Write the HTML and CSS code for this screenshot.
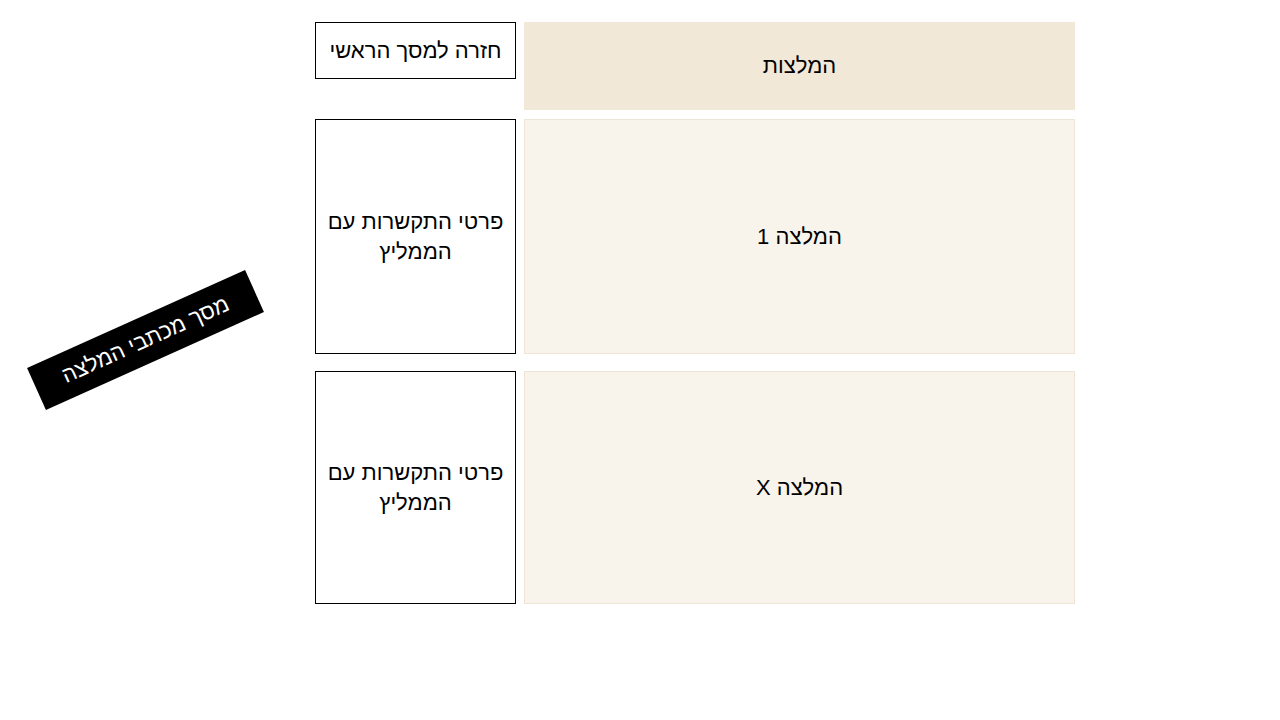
FILE: index.html
```html
<!DOCTYPE html>
<html lang="he" dir="rtl">
<head>
<meta charset="utf-8">
<title>מסך מכתבי המלצה</title>
<link rel="stylesheet" href="styles.css">
</head>
<body>
<div class="page">
  <div class="board">
    <div class="row row-head">
      <div class="card card-head">המלצות</div>
      <div class="side side-back">חזרה למסך הראשי</div>
    </div>
    <div class="row row-item">
      <div class="card card-item">המלצה 1</div>
      <div class="side side-contact">פרטי התקשרות עם<br>הממליץ</div>
    </div>
    <div class="row row-item row-last">
      <div class="card card-item">המלצה X</div>
      <div class="side side-contact">פרטי התקשרות עם<br>הממליץ</div>
    </div>
  </div>
  <div class="tag">מסך מכתבי המלצה</div>
</div>
</body>
</html>
```
FILE: styles.css
```css
html, body {
  margin: 0;
  padding: 0;
  background: #ffffff;
}
body {
  font-family: "Liberation Sans", "DejaVu Sans", Arial, sans-serif;
  color: #000;
  width: 1280px;
  height: 720px;
  overflow: hidden;
}
.page {
  position: relative;
  width: 1280px;
  height: 720px;
}
.board {
  display: flex;
  flex-direction: column;
  padding-top: 22px;
  padding-right: 205px;
  width: 760px;
}
.row {
  display: flex;
  flex-direction: row;
  gap: 8px;
  align-items: flex-start;
}
.row-head {
  margin-bottom: 9px;
}
.row-item {
  margin-bottom: 17px;
}
.card {
  width: 551px;
  box-sizing: border-box;
  display: flex;
  align-items: center;
  justify-content: center;
  font-size: 22px;
}
.card-head {
  height: 88px;
  background: #f2e8d7;
}
.card-item {
  background: #f8f3eb;
  border: 1px solid #efe5d6;
}
.row-item .card-item { height: 235px; }
.row-last .card-item { height: 233px; }
.side {
  width: 201px;
  box-sizing: border-box;
  border: 1px solid #000;
  background: #fff;
  display: flex;
  align-items: center;
  justify-content: center;
  text-align: center;
  font-size: 22px;
  line-height: 30px;
}
.side-back {
  height: 57px;
}
.row-item .side-contact { height: 235px; }
.row-last .side-contact { height: 233px; }
.tag {
  position: absolute;
  left: 26px;
  top: 317px;
  width: 239px;
  height: 46px;
  background: #000;
  color: #fff;
  font-size: 22px;
  display: flex;
  align-items: center;
  justify-content: center;
  transform: rotate(-24.2deg);
}
```
